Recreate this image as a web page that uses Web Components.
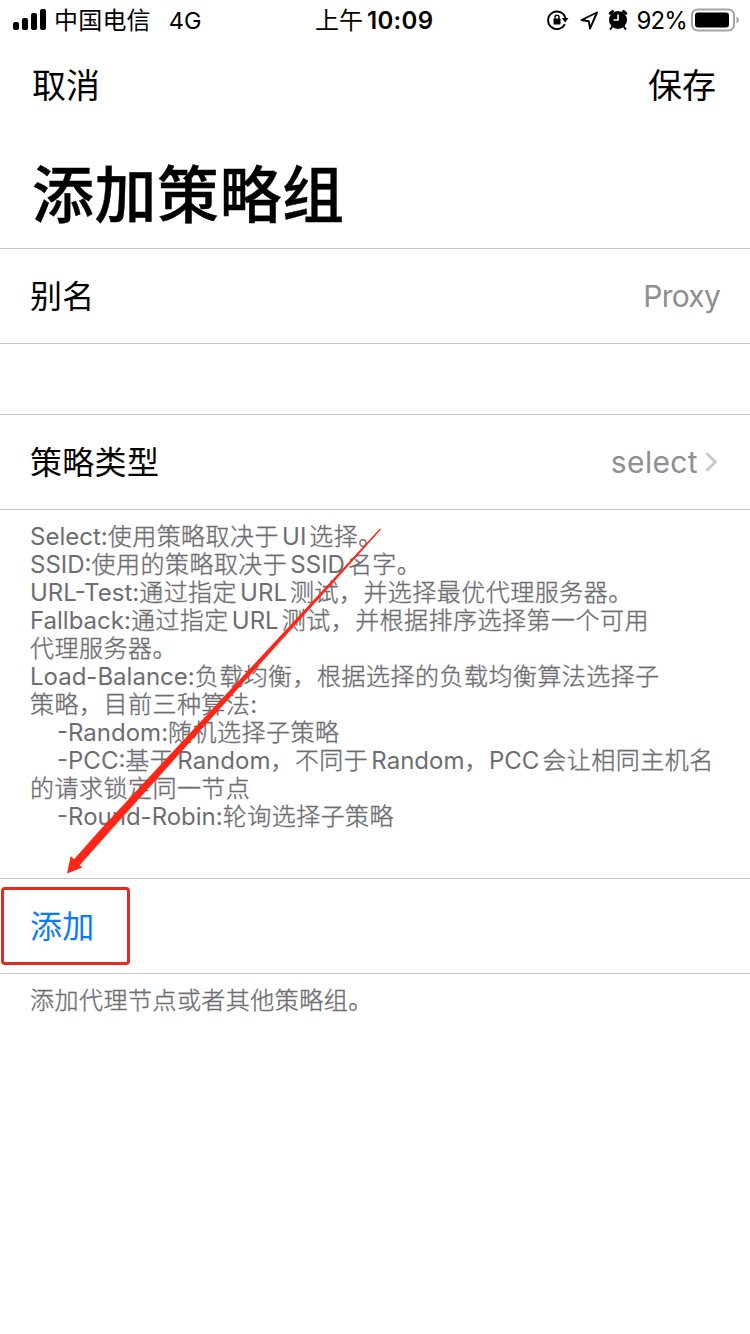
<!DOCTYPE html>
<html lang="zh-CN">
<head>
<meta charset="utf-8">
<title>添加策略组</title>
<style>
body{margin:0;background:#fff;font-family:Inter,"Noto Sans CJK SC",sans-serif;color:#000}
</style>
</head>
<body>
<policy-screen></policy-screen>
<script>
const define = (name, html, setup) => customElements.define(name, class extends HTMLElement {
  constructor() {
    super();
    const t = document.createElement('template');
    t.innerHTML = html;
    this.attachShadow({ mode: 'open' }).append(t.content.cloneNode(true));
  }
  connectedCallback() { if (setup) setup(this); }
});

define('status-bar', `<style>
:host{display:grid;grid-template-columns:315px 1fr auto;align-items:center;height:42px;font-size:24px;line-height:42px;white-space:nowrap}
div{display:flex;align-items:center;height:42px}
svg{display:block;flex:none;margin-bottom:2px}
.left{padding-left:13px}
.carrier{margin-left:8px;letter-spacing:.2px}
.net{margin-left:18px;font-size:23.5px}
.time{font-weight:600;font-size:24px;letter-spacing:.3px}
.time span{font-weight:400;margin-right:4px;letter-spacing:0}
.right{padding-right:11px}
.pct{margin-left:9px;margin-right:4px;letter-spacing:-.9px}
</style>
<div class="left"><svg width="33" height="22" viewBox="0 0 33 22"><rect x="0" y="13" width="6" height="8" rx="2"/><rect x="9" y="9" width="6" height="12" rx="2"/><rect x="18" y="4" width="6" height="17" rx="2"/><rect x="27" y="0" width="6" height="21" rx="2"/></svg><span class="carrier">中国电信</span><span class="net">4G</span></div>
<div class="time"><span>上午</span>10:09</div>
<div class="right">
<svg width="22" height="20" viewBox="0 0 22 20"><path d="M17.8 14.2A8.8 8.8 0 1 1 18.4 8" fill="none" stroke="#000" stroke-width="1.9"/><path d="M14.8 8H21.5L18.2 12.5Z"/><rect x="6.5" y="8.5" width="7" height="6" rx=".7"/><path d="M8 9V7.3a2 2 0 0 1 4 0V9" fill="none" stroke="#000" stroke-width="1.4"/></svg>
<svg width="19" height="19" viewBox="0 0 19 19" style="margin-left:11px"><path d="M1.5 9 17 1.5 10 17.5 8.8 10.2Z" fill="none" stroke="#000" stroke-width="1.9" stroke-linejoin="round"/></svg>
<svg width="20" height="22" viewBox="0 0 20 22" style="margin-left:9px"><circle cx="10" cy="11" r="9"/><path d="M2.2 4.4 4.6 2.4M15.4 2.4 17.8 4.4" stroke="#000" stroke-width="2.8" stroke-linecap="round"/><path d="M4.3 17.5 2.5 20M15.7 17.5 17.5 20" stroke="#000" stroke-width="2" stroke-linecap="round"/><path d="M10 5.5V11H5.5" fill="none" stroke="#fff" stroke-width="1.6"/></svg>
<span class="pct">92%</span>
<svg width="48" height="24" viewBox="0 0 48 24"><rect x="1" y="1.5" width="42" height="21" rx="5.5" fill="none" stroke="#a3a3a3" stroke-width="2"/><rect x="4" y="4.5" width="34" height="15" rx="3"/><path d="M45.5 8.5Q48 9.5 48 12T45.5 15.5Z" fill="#a3a3a3"/></svg>
</div>`);

define('nav-bar', `<style>
:host{display:flex;justify-content:space-between;align-items:center;height:87px;padding:0 34px 0 32px;font-size:34px;line-height:44px}
</style><slot name="start"></slot><slot name="end"></slot>`);

define('page-title', `<style>
:host{display:block;height:119px;box-sizing:border-box;padding:27px 32px 0;font-size:62px;line-height:80px;font-weight:500;-webkit-text-stroke:.4px #000;letter-spacing:.5px;white-space:nowrap}
</style><slot></slot>`);

define('list-row', `<style>
:host{display:flex;align-items:center;justify-content:space-between;box-sizing:border-box;height:96px;padding:0 30px;border-top:1px solid #c8c7cc;border-bottom:1px solid #c8c7cc;font-size:32px;line-height:44px}
.label{padding-top:2px;letter-spacing:.3px}
.value{display:flex;align-items:center;color:#8e8e93;font-size:30px}
svg{display:none}
:host([link]) svg{display:block;margin:0 3px 0 7px}
:host([action]){color:#0a7aff}
:host([action]) .label{padding-top:1px}
</style><span class="label"><slot></slot></span><div class="value"><slot name="value"></slot><svg width="12" height="20" viewBox="0 0 12 20"><path d="M1.5 1.2 10.3 10 1.5 18.8" fill="none" stroke="#c7c7cc" stroke-width="3"/></svg></div>`);

define('footer-note', `<style>
:host{display:block;padding:13px 30px 0;color:#6d6d72;font-size:24px;line-height:28px}
</style><slot></slot>`);

/* Wraps Latin runs so that they get their own tracking and a thin gap next to Han characters. */
define('note-line', `<style>
:host{display:block;height:28px;white-space:pre;letter-spacing:.48px;font-weight:300;-webkit-text-stroke:.35px #6d6d72}
:host([indent]){padding-left:27px}
.latin{font-weight:400;letter-spacing:0;-webkit-text-stroke:0}
.before{margin-left:3px}
.after{margin-right:3px}
</style><span id="line"></span>`, el => {
  const out = el.shadowRoot.getElementById('line');
  const text = el.getAttribute('text');
  text.split(/([A-Za-z:\-]+)/).filter(Boolean).forEach((run, i, all) => {
    const s = document.createElement('span');
    s.textContent = run;
    if (/^[A-Za-z:\-]/.test(run)) {
      s.className = 'latin';
      if (i > 0 && /[A-Za-z]/.test(run) && !/，$/.test(all[i - 1])) s.classList.add('before');
      if (all[i + 1] && /[A-Za-z]$/.test(run) && !/^，/.test(all[i + 1])) s.classList.add('after');
    }
    out.append(s);
  });
});

define('tap-hint', `<style>
:host{position:absolute;inset:0;pointer-events:none}
svg{display:block}
</style><svg width="750" height="1334" viewBox="0 0 750 1334"><path d="M380 528.5 381 529.5 111 830 79.5 865.5 82.7 867.3 67 873.5 70.7 856 74 859.3 100 830Z" fill="#ff2617"/><rect x="2.5" y="888.5" width="126" height="75" rx="2.5" fill="none" stroke="#e12c24" stroke-width="3"/></svg>`);

define('policy-screen', `<style>
:host{display:flex;flex-direction:column;position:relative;width:750px;height:1334px;overflow:hidden;background:#fff}
.type{margin-top:70px}
.add{margin-top:47px}
</style>
<status-bar></status-bar>
<nav-bar><span slot="start">取消</span><span slot="end">保存</span></nav-bar>
<page-title>添加策略组</page-title>
<list-row>别名<span slot="value" style="letter-spacing:-.75px">Proxy</span></list-row>
<list-row class="type" link>策略类型<span slot="value" style="letter-spacing:.35px">select</span></list-row>
<footer-note>
<note-line text="Select:使用策略取决于UI选择。"></note-line>
<note-line text="SSID:使用的策略取决于SSID名字。"></note-line>
<note-line text="URL-Test:通过指定URL测试，并选择最优代理服务器。"></note-line>
<note-line text="Fallback:通过指定URL测试，并根据排序选择第一个可用"></note-line>
<note-line text="代理服务器。"></note-line>
<note-line text="Load-Balance:负载均衡，根据选择的负载均衡算法选择子"></note-line>
<note-line text="策略，目前三种算法:"></note-line>
<note-line indent text="-Random:随机选择子策略"></note-line>
<note-line indent text="-PCC:基于Random，不同于Random，PCC会让相同主机名"></note-line>
<note-line text="的请求锁定同一节点"></note-line>
<note-line indent text="-Round-Robin:轮询选择子策略"></note-line>
</footer-note>
<list-row class="add" action>添加</list-row>
<footer-note><note-line text="添加代理节点或者其他策略组。"></note-line></footer-note>
<tap-hint></tap-hint>`);
</script>
</body>
</html>
